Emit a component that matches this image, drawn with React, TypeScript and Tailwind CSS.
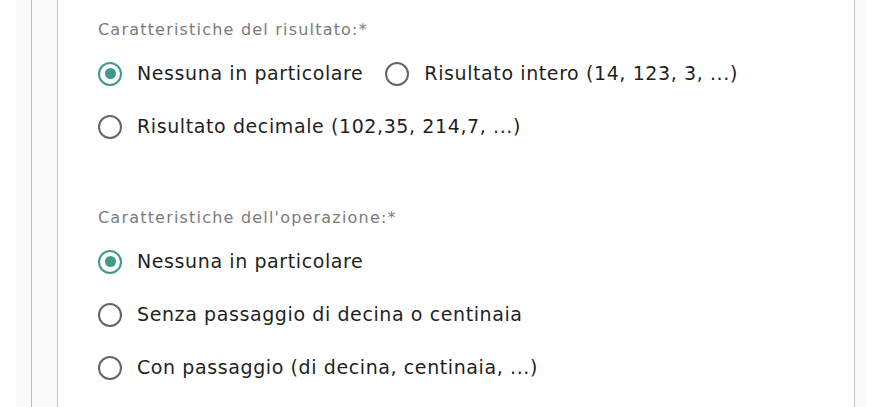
import { useState } from 'react';

type Option = { id: string; label: string };

const resultOptions: Option[] = [
  { id: 'none', label: 'Nessuna in particolare' },
  { id: 'int', label: 'Risultato intero (14, 123, 3, ...)' },
  { id: 'dec', label: 'Risultato decimale (102,35, 214,7, ...)' },
];

const opOptions: Option[] = [
  { id: 'none', label: 'Nessuna in particolare' },
  { id: 'no-carry', label: 'Senza passaggio di decina o centinaia' },
  { id: 'carry', label: 'Con passaggio (di decina, centinaia, ...)' },
];

function Radio({ checked }: { checked: boolean }) {
  return checked ? (
    <span className="flex h-6 w-6 shrink-0 items-center justify-center rounded-full border-[2.5px] border-[#3f9a89]">
      <span className="h-[11px] w-[11px] rounded-full bg-[#3f9a89]" />
    </span>
  ) : (
    <span className="h-6 w-6 shrink-0 rounded-full border-2 border-[#666666]" />
  );
}

function RadioGroup({
  title,
  options,
  inline,
}: {
  title: string;
  options: Option[];
  inline?: boolean;
}) {
  const [value, setValue] = useState('none');
  return (
    <div>
      <p className="text-[16px] leading-5 tracking-[1.2px] text-[#7b7b7b]">{title}</p>
      <div className={inline ? 'mt-[7px] flex flex-wrap gap-x-[22px]' : 'mt-[7px] flex flex-col'}>
        {options.map(o => (
          <label
            key={o.id}
            className="flex h-[53px] cursor-pointer items-center gap-[15px]"
            onClick={() => setValue(o.id)}
          >
            <Radio checked={value === o.id} />
            <span className="text-[19px] tracking-[0.6px] text-[#1f1f1f]">{o.label}</span>
          </label>
        ))}
      </div>
    </div>
  );
}

export default function App() {
  return (
    <div className="h-[407px] overflow-hidden bg-white pl-4 font-['DejaVu_Sans',sans-serif]">
      <div className="flex h-full w-[849px] bg-[#fafafa]">
        <div className="ml-[15px] w-px bg-[#bdbdbd]" />
        <div className="ml-[25px] flex-1 border-x border-[#c4c4c4] bg-white">
          <div className="px-10 pt-[20px]">
            <RadioGroup title="Caratteristiche del risultato:*" options={resultOptions} inline />
            <div className="mt-[55px]">
              <RadioGroup title="Caratteristiche dell'operazione:*" options={opOptions} />
            </div>
          </div>
        </div>
        <div className="w-[10px]" />
      </div>
    </div>
  );
}
